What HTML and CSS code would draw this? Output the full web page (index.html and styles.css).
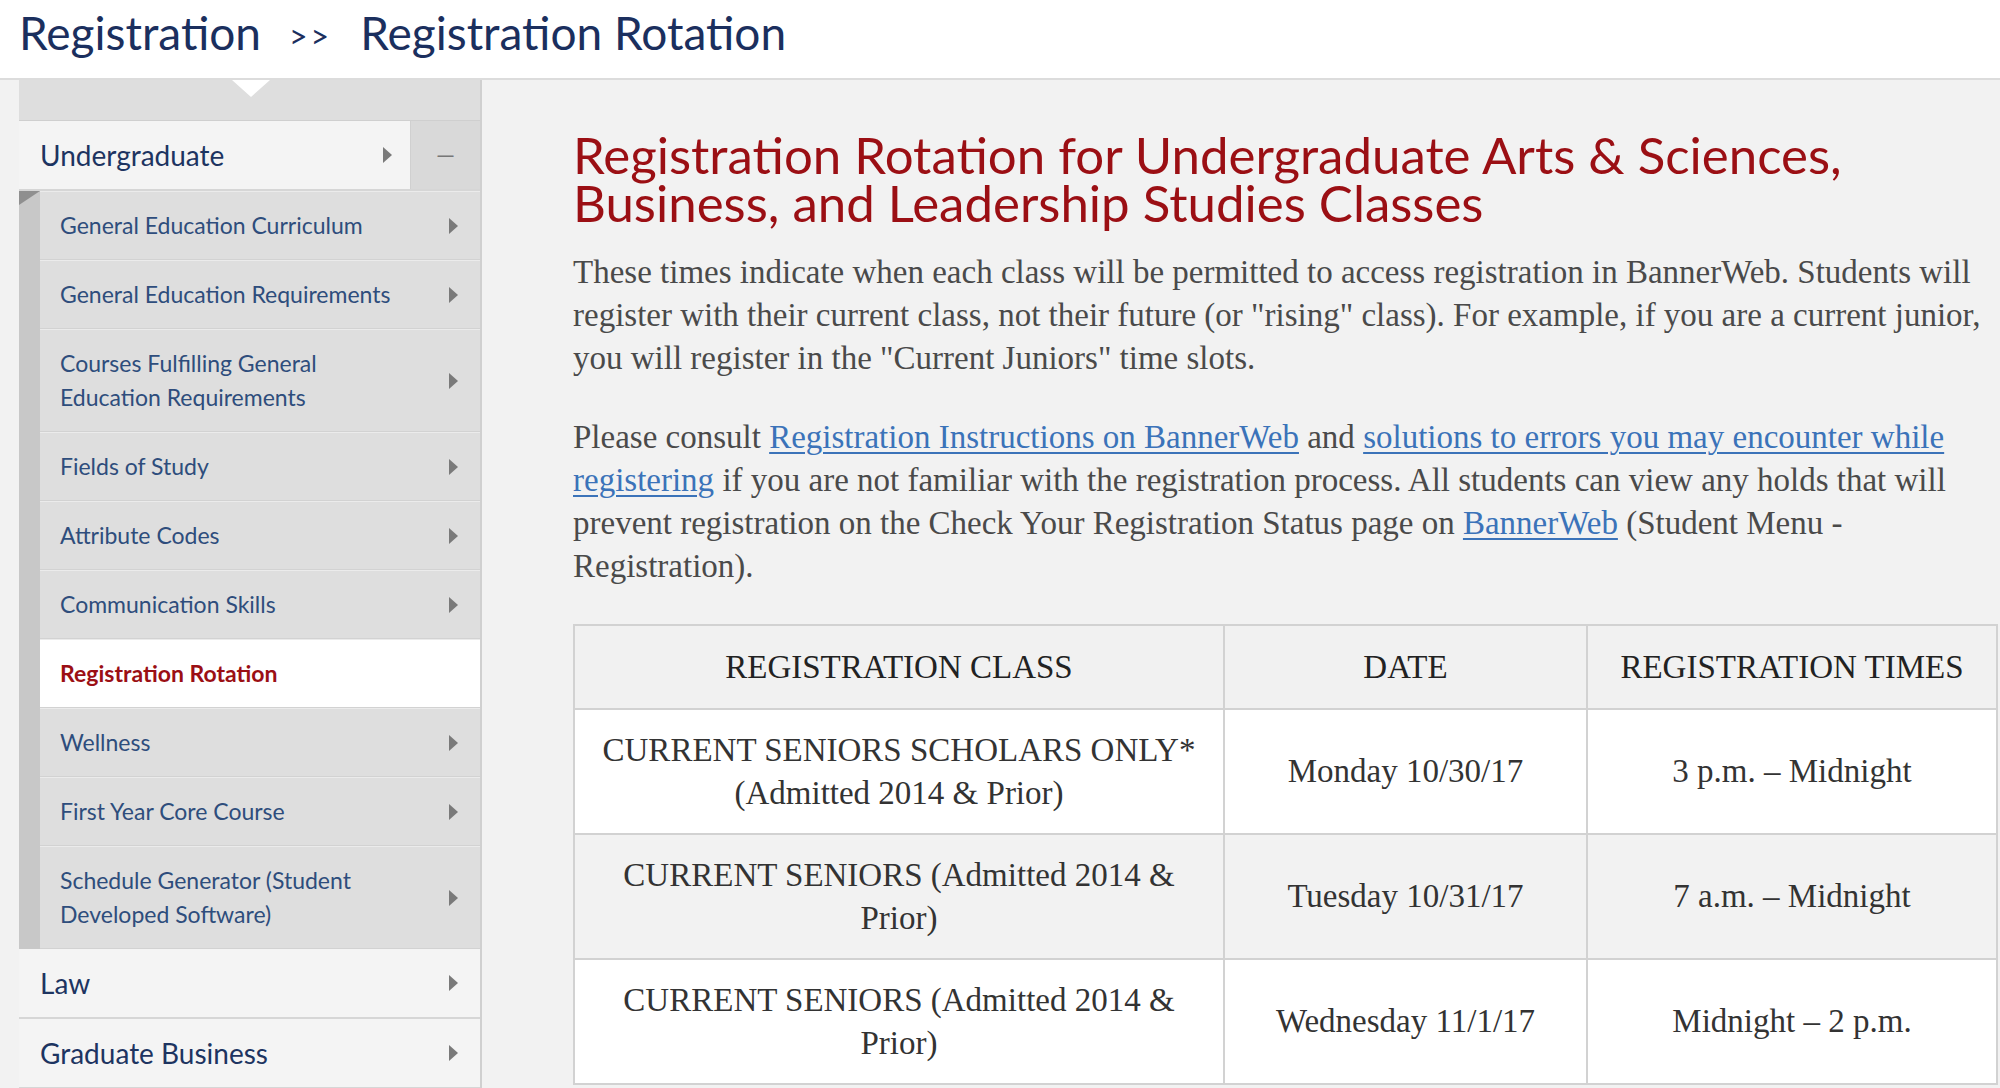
FILE: index.html
```html
<!DOCTYPE html>
<html lang="en">
<head>
    <meta charset="UTF-8">
    <title>Registration Rotation</title>
    <link rel="stylesheet" href="styles.css">
</head>
<body>
    <div class="crumbs">
        <span class="crumb">Registration</span>
        <span class="sep">&gt;&gt;</span>
        <span class="crumb">Registration Rotation</span>
    </div>

    <div class="page">
        <nav class="sidenav">
            <div class="nav-top"></div>
            <div class="nav-group open">
                <a class="nav-head">Undergraduate<span class="arrow"></span></a>
                <span class="collapse">&mdash;</span>
            </div>
            <ul class="subnav">
                <li><a>General Education Curriculum<span class="arrow"></span></a></li>
                <li><a>General Education Requirements<span class="arrow"></span></a></li>
                <li><a>Courses Fulfilling General<br>Education Requirements<span class="arrow"></span></a></li>
                <li><a>Fields of Study<span class="arrow"></span></a></li>
                <li><a>Attribute Codes<span class="arrow"></span></a></li>
                <li><a>Communication Skills<span class="arrow"></span></a></li>
                <li class="current"><a>Registration Rotation</a></li>
                <li><a>Wellness<span class="arrow"></span></a></li>
                <li><a>First Year Core Course<span class="arrow"></span></a></li>
                <li><a>Schedule Generator (Student<br>Developed Software)<span class="arrow"></span></a></li>
            </ul>
            <div class="nav-group">
                <a class="nav-head wide">Law<span class="arrow"></span></a>
            </div>
            <div class="nav-group">
                <a class="nav-head wide">Graduate Business<span class="arrow"></span></a>
            </div>
        </nav>

        <main class="content">
            <h1>Registration Rotation for Undergraduate Arts &amp; Sciences,<br>Business, and Leadership Studies Classes</h1>
            <p>These times indicate when each class will be permitted to access registration in BannerWeb. Students will register with their current class, not their future (or "rising" class). For example, if you are a current junior, you will register in the "Current Juniors" time slots.</p>
            <p>Please consult <a href="#">Registration Instructions on BannerWeb</a> and <a href="#">solutions to errors you may encounter while registering</a> if you are not familiar with the registration process. All students can view any holds that will prevent registration on the Check Your Registration Status page on <a href="#">BannerWeb</a> (Student Menu - Registration).</p>

            <table class="rotation">
                <thead>
                    <tr>
                        <th class="c-class">REGISTRATION CLASS</th>
                        <th class="c-date">DATE</th>
                        <th>REGISTRATION TIMES</th>
                    </tr>
                </thead>
                <tbody>
                    <tr>
                        <td>CURRENT SENIORS SCHOLARS ONLY*<br>(Admitted 2014 &amp; Prior)</td>
                        <td>Monday 10/30/17</td>
                        <td>3 p.m. &ndash; Midnight</td>
                    </tr>
                    <tr>
                        <td>CURRENT SENIORS (Admitted 2014 &amp;<br>Prior)</td>
                        <td>Tuesday 10/31/17</td>
                        <td>7 a.m. &ndash; Midnight</td>
                    </tr>
                    <tr>
                        <td>CURRENT SENIORS (Admitted 2014 &amp;<br>Prior)</td>
                        <td>Wednesday 11/1/17</td>
                        <td>Midnight &ndash; 2 p.m.</td>
                    </tr>
                </tbody>
            </table>
        </main>
    </div>
</body>
</html>
```

FILE: styles.css
```css
body {
    margin: 0;
    background-color: #f2f2f2;
    font-family: Lato, "Open Sans", sans-serif;
    overflow: hidden;
}
.crumbs {
    height: 80px;
    background: white;
    border-bottom: 2px solid #dcdcdc;
    padding-left: 19px;
    display: flex;
    align-items: center;
    gap: 28px;
    color: #1b2f5e;
    box-sizing: border-box;
}
.crumb {
    font-size: 46px;
    margin-top: -14px;
}
.sep {
    font-size: 32px;
    letter-spacing: 3px;
    margin-top: -8px;
}
.page {
    display: flex;
    align-items: flex-start;
}

/* side navigation */
.sidenav {
    width: 463px;
    margin-left: 19px;
    flex-shrink: 0;
    border-right: 2px solid #d0d0d0;
    box-sizing: border-box;
}
.nav-top {
    height: 41px;
    background: #dedede;
    border-bottom: 1px solid #cfcfcf;
    position: relative;
    box-sizing: border-box;
}
.nav-top::after {
    content: "";
    position: absolute;
    left: 213px;
    top: 0;
    border-left: 19px solid transparent;
    border-right: 19px solid transparent;
    border-top: 17px solid #fff;
}
.nav-group {
    display: flex;
    background: #f4f4f4;
    border-bottom: 2px solid #d6d6d6;
}
.nav-head {
    flex: 1;
    position: relative;
    height: 68px;
    line-height: 68px;
    padding-left: 21px;
    font-size: 28px;
    color: #1d3461;
    border-right: 1px solid #d0d0d0;
}
.nav-head.wide {
    border-right: none;
}
.collapse {
    width: 69px;
    background: #d9d9d9;
    color: #777;
    text-align: center;
    line-height: 66px;
    font-size: 24px;
}
.arrow {
    position: absolute;
    right: 22px;
    top: 50%;
    margin-top: -8px;
    border-top: 8px solid transparent;
    border-bottom: 8px solid transparent;
    border-left: 9px solid #7a7a7a;
}
.nav-group.open .arrow {
    right: 18px;
}
.subnav {
    list-style: none;
    margin: 0;
    padding: 0 0 0 21px;
    background: #c8c8c8;
    position: relative;
}
.subnav::before {
    content: "";
    position: absolute;
    left: 0;
    top: 0;
    border-top: 14px solid #8f8f8f;
    border-right: 21px solid transparent;
}
.subnav li {
    background: #dedede;
    border-top: 1px solid #ebebeb;
    border-bottom: 1px solid #d2d2d2;
}
.subnav li a {
    display: block;
    position: relative;
    padding: 16px 60px 17px 20px;
    line-height: 34px;
    font-size: 23px;
    color: #2e4d7c;
}
.subnav li.current {
    background: #fff;
}
.subnav li.current a {
    color: #9b0f14;
    font-weight: bold;
}

/* main content */
.content {
    flex: 1;
    margin-left: 91px;
    padding-top: 51px;
    font-family: "Liberation Serif", "Times New Roman", serif;
}
.content h1 {
    margin: 0 0 24px 0;
    font-family: Lato, "Open Sans", sans-serif;
    font-weight: normal;
    font-size: 51px;
    line-height: 48px;
    color: #9b0f14;
}
.content p {
    margin: 0 0 36px 0;
    font-size: 33px;
    line-height: 43px;
    color: #4a4a4a;
    padding-right: 8px;
}
.content a {
    color: #3b73b9;
    text-decoration-thickness: 2px;
    text-underline-offset: 4px;
}
.rotation {
    border-collapse: collapse;
    width: 1425px;
    margin-top: 8px;
    font-size: 33px;
    line-height: 43px;
    color: #333;
}
.rotation th,
.rotation td {
    border: 2px solid #d2d2d2;
    text-align: center;
}
.rotation th {
    height: 80px;
    font-weight: normal;
    color: #222;
    background: #f1f1f1;
}
.rotation td {
    height: 121px;
}
.rotation tbody tr:nth-child(odd) td {
    background: #fff;
}
.rotation tbody tr:nth-child(even) td {
    background: #f2f2f2;
}
.c-class {
    width: 646px;
}
.c-date {
    width: 359px;
}
```
